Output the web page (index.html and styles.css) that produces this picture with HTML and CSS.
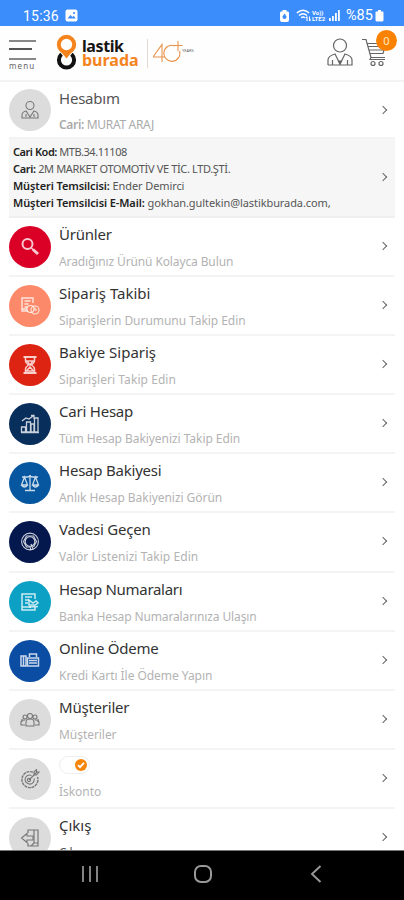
FILE: index.html
```html
<!DOCTYPE html>
<html lang="tr">
<head>
<meta charset="utf-8">
<title>Lastik Burada</title>
<link rel="stylesheet" href="styles.css">
</head>
<body>
<div class="phone">
  <div class="status">
    <span class="time">15:36</span>
    <svg class="gallery" width="13" height="13" viewBox="0 0 13 13"><rect x=".5" y=".5" width="12" height="12" rx="2" fill="#fff"/><path d="M2.5 9.5 5.5 6l2 2 1.3-1.2 2 2.7z" fill="#3c8dfc"/><circle cx="9" cy="4" r="1.1" fill="#3c8dfc"/></svg>
    <svg class="saver" width="9" height="12" viewBox="0 0 9 12"><path d="M2.5 0h4v1.5H8Q9 1.5 9 3v7q0 2-2 2H2q-2 0-2-2V3q0-1.5 1-1.5h1.500z" fill="#fff"/><path d="M4.500 3.500 6.500 6.500Q6.500 9 4.500 9T2.500 6.500z" fill="#3c8dfc"/></svg>
    <svg class="wifi" width="15" height="13" viewBox="0 0 15 13" fill="none" stroke="#fff" stroke-width="1.500"><path d="M.8 4Q7 -1.500 13.200 4M3 6.500q4-3.500 8 0M5.200 8.800q1.800-1.500 3.600 0"/><path d="M11 12V7.500M9.800 9 11 7.500M13.500 7.500V12M14.700 10.500 13.500 12" stroke-width="1.100"/></svg>
    <span class="lte"><span>Vo))</span><span>LTE2</span></span>
    <svg class="signal" width="11" height="11" viewBox="0 0 11 11" fill="#fff"><path d="M0 8h1.800v3H0zM3 6h1.800v5H3zM6 3h1.800v8H6zM9 0h1.800v11H9z"/></svg>
    <span class="percent">%85</span>
    <svg width="9" height="12" viewBox="0 0 9 12"><path d="M3 0h3v1.500h1.500q1 0 1 1V10q0 1.500-1.500 1.500H2Q.5 11.500.5 10V2.500q0-1 1-1H3z" fill="#fff"/></svg>
  </div>
  <header class="header">
    <div class="menu"><i></i><i class="short"></i><i class="last"></i><span>menu</span></div>
    <svg class="logo-mark" width="21" height="36" viewBox="0 0 21 36" fill="none"><circle cx="10.500" cy="26" r="7.600" stroke="#111" stroke-width="4"/><path d="M1.500 15 10.500 26.500 19.500 15z" fill="#fff"/><path d="M3 15.500 10.500 24.500 18 15.500z" fill="#f5841f"/><circle cx="10.500" cy="10.500" r="7.700" fill="#fff" stroke="#f5841f" stroke-width="4"/></svg>
    <div class="brand"><span>lastik</span><span class="orange">burada</span></div>
    <div class="years">
      <svg width="32" height="25" viewBox="0 0 32 25" fill="none" stroke="#e9924b" stroke-width="1.100"><path d="M9 22V4.500L0 17h12M26.500 11a8 8 0 1 1-4.500-5M25 1v10M20.500 5.500h9"/></svg><span>YEARS</span>
    </div>
    <svg class="user" width="27" height="29" viewBox="0 0 27 29" fill="none" stroke="#666" stroke-width="1.200"><circle cx="13" cy="7.500" r="6.500"/><path d="M1 27v-5q0-4 7-6l5 10 5-10q7 2 7 6v5H1M5.500 22v5M20.500 22v5"/><path d="m11.500 23 1.500 3 1.500-3z" fill="#555"/></svg>
    <div class="cart">
      <svg width="26" height="30" viewBox="0 0 26 30" fill="none" stroke="#666" stroke-width="1.200"><path d="M0 1.500h4l5 18h14M5 5.500h19l-3 10H8M6 8.500h17M7 12h15M9 19.500l-1 2h15"/><circle cx="11" cy="25.500" r="2"/><circle cx="19" cy="25.500" r="2"/></svg>
      <span class="badge">0</span>
    </div>
  </header>
  <main class="list">
    <section class="row account">
      <span class="disc"><svg viewBox="0 0 20 20"><circle cx="10" cy="5.500" r="4"/><path d="M2 18v-3q0-3 4-4l4 6 4-6q4 1 4 4v3zM6 14v3M14 14v3"/></svg></span>
      <div class="copy"><h2 class="soft">Hesabım</h2><p><b>Cari:</b> MURAT ARAJ</p></div><i class="chev"></i>
    </section>
    <section class="info">
      <div><p class="code"><b>Cari Kod:</b> MTB.34.11108</p><p class="company"><b>Cari:</b> 2M MARKET OTOMOTİV VE TİC. LTD.ŞTİ.</p><p class="agent"><b>Müşteri Temsilcisi:</b> Ender Demirci</p><p class="mail"><b>Müşteri Temsilcisi E-Mail:</b> gokhan.gultekin@lastikburada.com,</p></div><i class="chev"></i>
    </section>
    <section class="row">
      <span class="disc red"><svg viewBox="0 0 20 20"><circle cx="7.500" cy="7" r="5" stroke-width="2"/><path d="m11.500 11 2 2" stroke-width="1.500"/><path d="m13 12.500 5 4.500" stroke-width="3"/></svg></span>
      <div class="copy"><h2>Ürünler</h2><p class="tight">Aradığınız Ürünü Kolayca Bulun</p></div><i class="chev"></i>
    </section>
    <section class="row">
      <span class="disc salmon"><svg viewBox="0 0 20 20"><path d="M8 15H2V2h11v5M4.500 5h6M4.500 8h4M4.500 11h3M2 13h5" stroke-width="1.400"/><circle cx="10.500" cy="13" r="3.500"/><circle cx="15" cy="14" r="4"/><path d="M15 11.500V14h2"/></svg></span>
      <div class="copy"><h2 class="wide">Sipariş Takibi</h2><p>Siparişlerin Durumunu Takip Edin</p></div><i class="chev"></i>
    </section>
    <section class="row">
      <span class="disc scarlet"><svg viewBox="0 0 20 20"><path d="M3.500 2h13M3.500 18h13" stroke-width="2.200"/><path d="M5.500 3v3q0 2 3 4-3 2-3 4v3M14.500 3v3q0 2-3 4 3 2 3 4v3M7 6h6l-3 4zM6.500 16l3.500-4 3.500 4z" stroke-width="1.500"/></svg></span>
      <div class="copy"><h2 class="wide">Bakiye Sipariş</h2><p class="loose">Siparişleri Takip Edin</p></div><i class="chev"></i>
    </section>
    <section class="row">
      <span class="disc navy"><svg viewBox="0 0 20 20"><path d="M1.500 18v-5h4v5zM6.500 18V8h4v10zM11 18v-8h3v8zM14.500 18V4H18v14zM1 18.500h18M2 7l4-3 3 1 4-3M11 1.500h3V5" stroke-width="1.300"/></svg></span>
      <div class="copy"><h2>Cari Hesap</h2><p>Tüm Hesap Bakiyenizi Takip Edin</p></div><i class="chev"></i>
    </section>
    <section class="row">
      <span class="disc blue"><svg viewBox="0 0 20 20"><path d="M2 4h5q3 0 3-2 0 2 3 2h5M10 3v14M5 17.500h10M4.500 4 1.500 12h6zM15.500 4l-3 8h6zM1.500 12q3 4 6 0M12.500 12q3 4 6 0" stroke-width="1.300"/></svg></span>
      <div class="copy"><h2>Hesap Bakiyesi</h2><p>Anlık Hesap Bakiyenizi Görün</p></div><i class="chev"></i>
    </section>
    <section class="row">
      <span class="disc midnight"><svg viewBox="0 0 20 20"><circle cx="10" cy="9.500" r="8.400"/><circle cx="10" cy="9.500" r="4.800"/><path d="M3.500 9.500 6.500 4h7l3 5.500-3 5.500M3.500 9.500 6.500 15H10l1 3M11 12l2 5" stroke-width="1.200"/></svg></span>
      <div class="copy"><h2>Vadesi Geçen</h2><p class="loose">Valör Listenizi Takip Edin</p></div><i class="chev"></i>
    </section>
    <section class="row">
      <span class="disc cyan"><svg viewBox="0 0 20 20"><path d="M15 7V2H2v16h13v-3M5 5h7M5 8h4M5 11h3M2 15h9" stroke-width="1.500"/><path d="m9 8 4 3 3-2 2 2-3 2H9zM9 15l9-.5" stroke-width="1.500"/></svg></span>
      <div class="copy"><h2 class="narrow">Hesap Numaraları</h2><p class="tight">Banka Hesap Numaralarınıza Ulaşın</p></div><i class="chev"></i>
    </section>
    <section class="row">
      <span class="disc royal"><svg viewBox="0 0 20 20"><path d="M1 5h5v10H1zM3.500 5v10" stroke-width="1.500"/><path d="M7.500 7h11v8h-11zM9.500 6V3h7v3M9 9.500h8M9 12h8" stroke-width="1.500"/></svg></span>
      <div class="copy"><h2>Online Ödeme</h2><p>Kredi Kartı İle Ödeme Yapın</p></div><i class="chev"></i>
    </section>
    <section class="row">
      <span class="disc"><svg viewBox="0 0 20 20"><circle cx="10" cy="6" r="2.500"/><circle cx="5" cy="7" r="2"/><circle cx="15" cy="7" r="2"/><path d="M6 16v-4q0-3 4-3t4 3v4zM5 15H1v-3q0-2 4-2M15 15h4v-3q0-2-4-2M2 12V9M18 12V9"/></svg></span>
      <div class="copy"><h2>Müşteriler</h2><p>Müşteriler</p></div><i class="chev"></i>
    </section>
    <section class="row">
      <span class="disc"><svg viewBox="0 0 20 20"><path d="M13 3.200A8 8 0 1 0 17.500 8" stroke-dasharray="3 .7" stroke-width="1.400"/><path d="M11.500 6.500a4.500 4.500 0 1 0 2.500 3M9 11l8-8M14 6V3l2.500-2.500V3H19l-2.500 3H14"/><circle cx="9" cy="11" r="1.600"/></svg></span>
      <div class="copy"><div class="toggle"><span><svg width="12" height="12" viewBox="0 0 12 12" fill="none" stroke="#fff" stroke-width="1.800"><path d="m3 6.200 2 2 4-4.400"/></svg></span></div><p>İskonto</p></div><i class="chev"></i>
    </section>
    <section class="row">
      <span class="disc"><svg viewBox="0 0 20 20"><path d="M8 5V2h10v16H8v-3M14 2v13h4M14 15l-3 3" stroke-width="1.200"/><path d="M13 8H7V5.500L1.500 10 7 14.500V12h6z"/></svg></span>
      <div class="copy"><h2 class="wide">Çıkış</h2><p class="dark">Çıkış</p></div><i class="chev"></i>
    </section>
  </main>
  <nav class="nav">
    <svg width="16" height="16" viewBox="0 0 16 16" stroke="#999" stroke-width="1.700"><path d="M1 0v16M8 0v16M15 0v16"/></svg>
    <svg width="20" height="20" viewBox="0 0 20 20" fill="none" stroke="#999" stroke-width="2"><rect x="2" y="2" width="16" height="16" rx="6"/></svg>
    <svg width="12" height="18" viewBox="0 0 12 18" fill="none" stroke="#999" stroke-width="1.900"><path d="M10.500 1 2 9l8.500 8"/></svg>
  </nav>
</div>
</body>
</html>
```
FILE: styles.css
```css
* { box-sizing: border-box; }
body { margin: 0; font-family: "Noto Sans", sans-serif; background: #fff; }
h2, p { margin: 0; white-space: nowrap; }
svg { display: block; flex: none; }
.phone { width: 404px; height: 900px; overflow: hidden; display: flex; flex-direction: column; }

.status { height: 26px; flex: none; background: #3c8dfc; color: #fff; display: flex; align-items: center; padding: 5px 20px 0 23px; font-family: Roboto, sans-serif; }
.time { font-size: 14px; letter-spacing: .2px; width: 42px; }
.saver { margin-left: auto; margin-right: 7px; }
.lte { display: flex; flex-direction: column; font-size: 6px; line-height: 6px; font-weight: 700; width: 16px; margin-left: 1px; }
.signal { margin: 0 6px 0 1px; }
.percent { font-size: 14.500px; width: 29px; white-space: nowrap; }

.header { height: 56px; flex: none; display: flex; align-items: flex-start; border-bottom: 2px solid #f3f3f3; padding-left: 9px; background: #fefefe; }
.menu { width: 47px; padding-top: 14px; display: flex; flex-direction: column; }
.menu i { height: 2px; width: 27px; background: #888; margin-bottom: 6px; }
.menu .short { width: 23px; background: #555; margin-bottom: 8px; }
.menu .last { margin-bottom: 1px; }
.menu span { font-size: 8px; line-height: 9px; letter-spacing: 1.100px; color: #666; }
.logo-mark { margin-top: 8px; }
.brand { margin: 13px 0 0 5px; width: 65px; display: flex; flex-direction: column; font-weight: 700; font-size: 16px; line-height: 14px; letter-spacing: -.4px; color: #151515; }
.brand .orange { color: #f5841f; letter-spacing: 0; }
.years { margin-top: 13px; height: 29px; border-left: 1px solid #e5d9cf; padding: 1px 0 0 5px; display: flex; width: 50px; }
.years span { font-size: 4px; line-height: 5px; margin: 8px 0 0 -3px; color: #666; }
.user { margin: 12px 0 0 130px; }
.cart { position: relative; margin: 12px 0 0 8px; }
.badge { position: absolute; left: 14px; top: -8px; width: 21px; height: 21px; border-radius: 50%; background: #fa8200; color: #ffe8c8; font-size: 11px; line-height: 21px; text-align: center; }

.list { height: 768px; flex: none; overflow: hidden; padding: 0 9px; }
.row { height: 59.100px; display: flex; border-bottom: 2px solid #f4f4f4; }
.row.account { height: 57px; border-color: #f3f3f3; }
.disc { width: 42px; height: 42px; border-radius: 50%; margin: 8px 8px 0 0; background: #dcdcdc; display: flex; align-items: center; justify-content: center; flex: none; }
.disc svg { width: 20px; height: 20px; fill: none; stroke: #777; stroke-width: 1.100; }
.red, .salmon, .scarlet, .navy, .blue, .midnight, .cyan, .royal { background: var(--tone); }
.red svg, .salmon svg, .scarlet svg, .navy svg, .blue svg, .midnight svg, .cyan svg, .royal svg { stroke: #ffffffc8; }
.red { --tone: #db0026; }
.salmon { --tone: #fc8a6a; }
.scarlet { --tone: #dd2412; }
.navy { --tone: #082e5c; }
.blue { --tone: #0757a0; }
.midnight { --tone: #05184d; }
.cyan { --tone: #0ba0c4; }
.royal { --tone: #0a4da2; }
.copy { flex: 1; min-width: 0; }
h2 { font-size: 15px; line-height: 20px; padding-top: 6px; font-weight: 400; color: #333; letter-spacing: -.220px; }
h2.wide { letter-spacing: 0; }
h2.narrow { letter-spacing: -.3px; }
.copy p { font-size: 12px; line-height: 16px; margin-top: 10px; color: #b3b3b3; letter-spacing: -.050px; }
.copy p.tight { letter-spacing: -.120px; }
.copy p.loose { letter-spacing: .060px; }
.copy p.dark { color: #555; }
.account .copy p { margin-top: 9px; color: #aaa; letter-spacing: -.320px; }
.account .disc { margin-top: 7px; }
h2.soft { color: #555; }
b { font-weight: 600; }
.chev { width: 6px; height: 6px; border: solid #666; border-width: 1.400px 1.400px 0 0; transform: rotate(45deg); margin: 25px 9px 0 0; flex: none; }
.info { height: 79px; background: #f6f6f6; border-bottom: 2px solid #efefef; display: flex; padding: 4px 0 0 4px; justify-content: space-between; }
.info p { font-size: 11px; line-height: 17px; color: #555; }
.info .code { letter-spacing: -.460px; }
.info .company { letter-spacing: -.350px; }
.info .agent { letter-spacing: -.100px; }
.info .mail { letter-spacing: -.090px; }
.info b { color: #222; }
.info .chev { margin-top: 31px; }
.toggle { width: 31px; height: 18px; border: 1px solid #eee; border-radius: 9px; margin: 6px 0 2px; display: flex; justify-content: flex-end; padding: 2px; }
.toggle span { width: 12px; height: 12px; border-radius: 50%; background: #f5860a; }

.nav { height: 50px; flex: none; background: #000; border-top: 1px solid #777; display: grid; grid-template-columns: 16px 20px 12px; column-gap: 95px; align-items: center; padding: 0 0 3px 82px; }
.nav svg:last-child { margin-left: 2px; }
```
